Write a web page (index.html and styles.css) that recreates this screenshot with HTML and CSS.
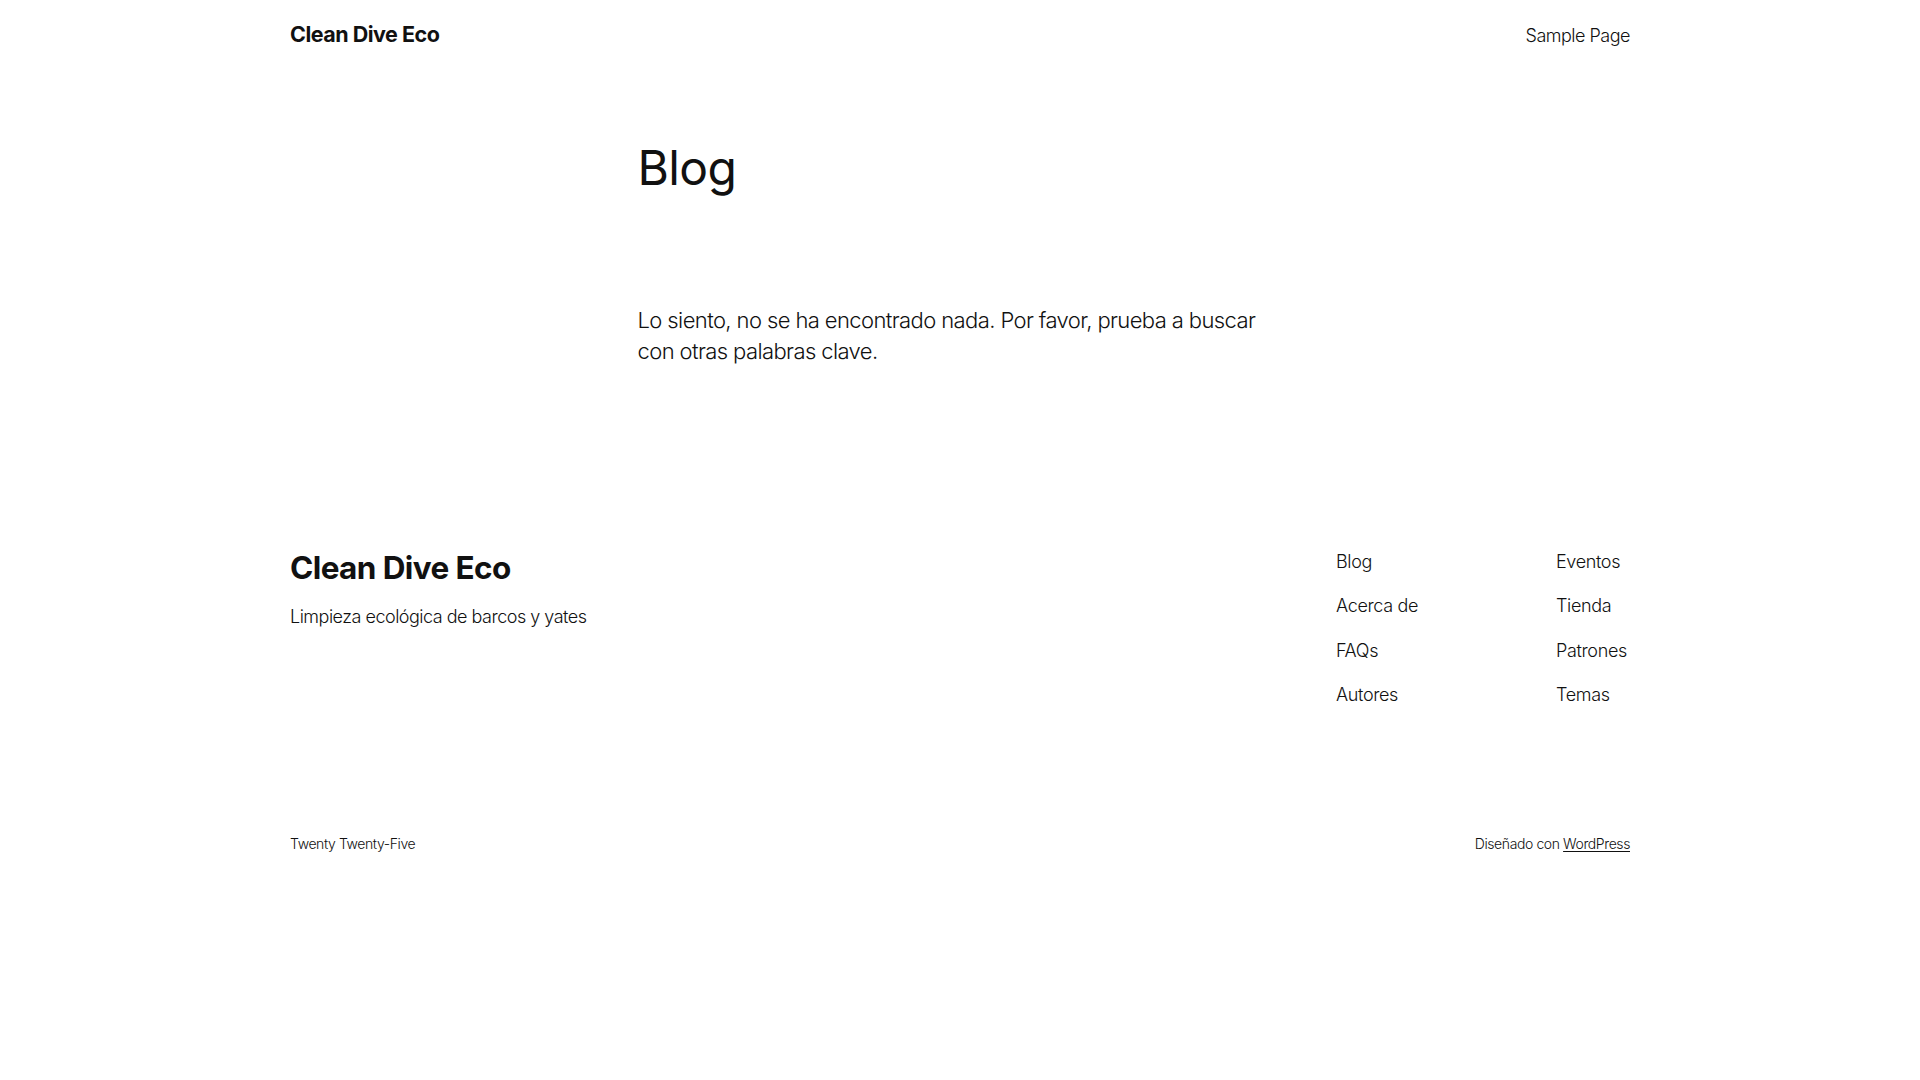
FILE: index.html
```html
<!DOCTYPE html>
<html lang="es">
<head>
<meta charset="utf-8">
<title>Blog – Clean Dive Eco</title>
<link rel="stylesheet" href="styles.css">
</head>
<body>
<header class="site-header">
  <div class="wide header-row">
    <a class="site-title" href="#">Clean Dive Eco</a>
    <nav class="header-nav"><a href="#">Sample Page</a></nav>
  </div>
</header>
<main class="site-main">
  <div class="content">
    <h1 class="page-title">Blog</h1>
    <p class="no-results">Lo siento, no se ha encontrado nada. Por favor, prueba a buscar con otras palabras clave.</p>
  </div>
</main>
<footer class="site-footer">
  <div class="wide footer-top">
    <div class="footer-brand">
      <h2 class="footer-title">Clean Dive Eco</h2>
      <p class="tagline">Limpieza ecológica de barcos y yates</p>
    </div>
    <div class="footer-navs">
      <ul class="footer-nav col-1">
        <li><a href="#">Blog</a></li>
        <li><a href="#">Acerca de</a></li>
        <li><a href="#">FAQs</a></li>
        <li><a href="#">Autores</a></li>
      </ul>
      <ul class="footer-nav col-2">
        <li><a href="#">Eventos</a></li>
        <li><a href="#">Tienda</a></li>
        <li><a href="#">Patrones</a></li>
        <li><a href="#">Temas</a></li>
      </ul>
    </div>
  </div>
  <div class="wide footer-bottom">
    <p class="credit-theme">Twenty Twenty-Five</p>
    <p class="credit-wp">Diseñado con <a href="#">WordPress</a></p>
  </div>
</footer>
</body>
</html>
```
FILE: styles.css
```css
* { box-sizing: border-box; }
html, body { margin: 0; padding: 0; }
body {
  background: #ffffff;
  color: #111111;
  font-family: Inter, "Noto Sans", sans-serif;
  font-weight: 300;
  font-size: 22px;
  line-height: 1.4;
  letter-spacing: -0.45px;
}
a { color: #111111; text-decoration: none; }
p, h1, h2, ul { margin: 0; padding: 0; }
ul { list-style: none; }

.wide { width: 1340px; margin: 0 auto; }

.site-header { padding: 17px 0 17px; }
.header-row {
  display: flex;
  justify-content: space-between;
  align-items: center;
  height: 34px;
}
.site-title {
  font-size: 21.5px;
  font-weight: 700;
  letter-spacing: -0.5px;
  padding-top: 1px;
}
.header-nav a { font-size: 18px; letter-spacing: -0.5px; }

.site-main { padding: 73px 0 0; }
.content { width: 645px; margin: 0 auto; }
.page-title {
  font-size: 48px;
  font-weight: 400;
  line-height: 54px;
  letter-spacing: -0.6px;
}
.no-results {
  margin-top: 110px;
  font-size: 22px;
  line-height: 30.8px;
  letter-spacing: -0.6px;
}

.site-footer { padding-top: 182px; }
.footer-top {
  display: flex;
  justify-content: space-between;
  align-items: flex-start;
}
.footer-title {
  font-size: 31.5px;
  font-weight: 700;
  line-height: 38px;
  letter-spacing: -0.6px;
}
.tagline {
  margin-top: 17px;
  font-size: 18px;
  line-height: 25px;
  letter-spacing: -0.5px;
}
.footer-navs { display: flex; }
.footer-nav {
  display: flex;
  flex-direction: column;
  gap: 19.5px;
  font-size: 18px;
  line-height: 25px;
  letter-spacing: -0.35px;
}
.footer-nav.col-1 { width: 220px; }
.footer-nav.col-2 { width: 74px; }

.footer-bottom {
  margin-top: 127px;
  display: flex;
  justify-content: space-between;
  font-size: 14px;
  line-height: 20px;
  letter-spacing: -0.4px;
}
.credit-wp a { text-decoration: underline; text-underline-offset: 2px; }
```
